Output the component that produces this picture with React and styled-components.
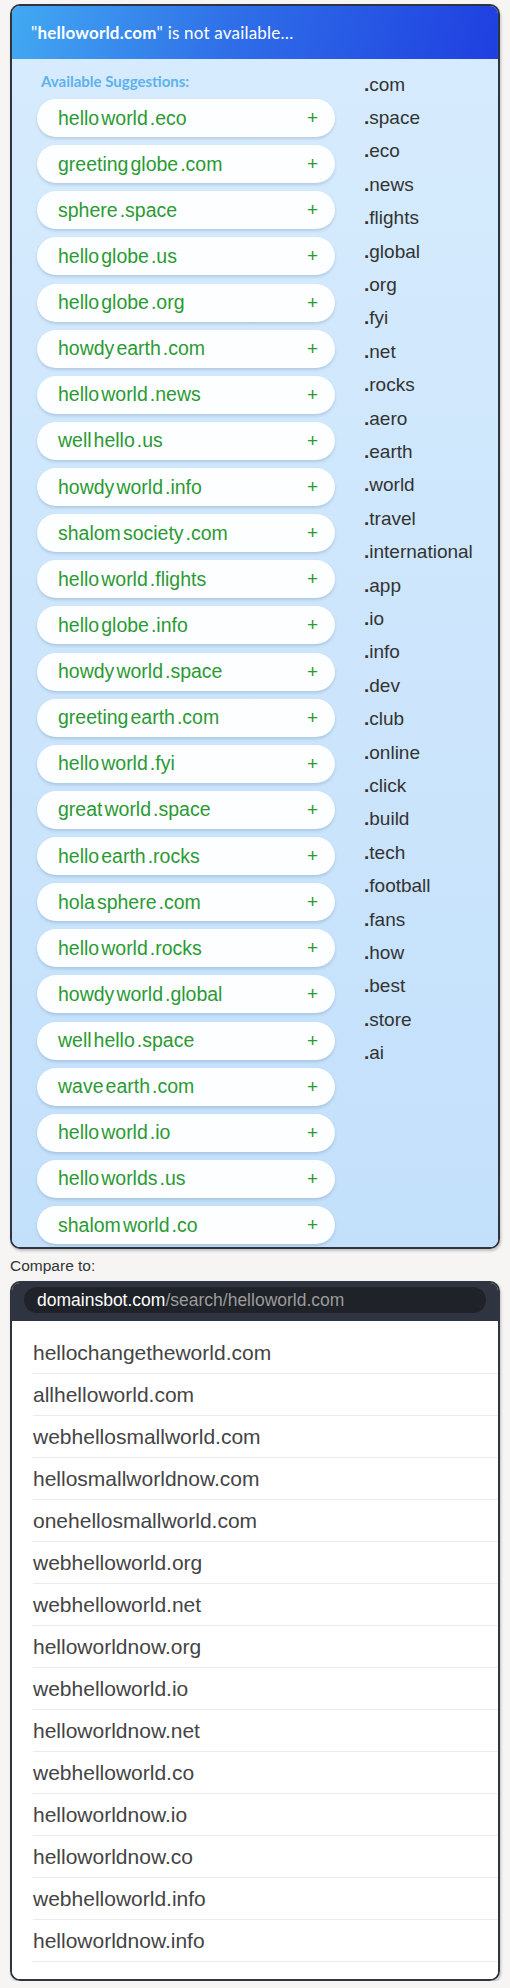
import React from "react";
import styled, { createGlobalStyle } from "styled-components";

const Global = createGlobalStyle`
  html, body { margin: 0; padding: 0; }
  body {
    background: #f6f5f3;
    font-family: "Liberation Sans", Arial, sans-serif;
    color: #333;
  }
`;

const Page = styled.div`
  width: 510px;
  padding: 4px 10px 0;
  box-sizing: border-box;
`;

const Card = styled.div`
  border: 2px solid #2f3540;
  border-radius: 10px;
  overflow: hidden;
  box-shadow: 1px 2px 3px rgba(0, 0, 0, 0.22);
`;

const Header = styled.div`
  height: 53px;
  display: flex;
  align-items: center;
  padding-left: 19px;
  background: linear-gradient(105deg, #42a9f2 0%, #2f6fe8 45%, #1f3fe0 100%);
  color: #fff;
  font-family: Lato, "Open Sans", sans-serif;
  font-size: 17px;
  letter-spacing: 0.2px;
  b { font-weight: 700; }
`;

const Body = styled.div`
  display: grid;
  grid-template-columns: 298px 1fr;
  column-gap: 29px;
  padding: 0 0 3px 25px;
  background: linear-gradient(180deg, #d6ebfd 0%, #c3e0fb 100%);
`;

const Left = styled.div`
  display: flex;
  flex-direction: column;
  padding-top: 14px;
`;

const Label = styled.div`
  font-family: Lato, "Open Sans", sans-serif;
  font-weight: 700;
  font-size: 15px;
  line-height: 17px;
  color: #5db2ec;
  padding-left: 4px;
  margin-bottom: 9px;
`;

const Pills = styled.div`
  display: flex;
  flex-direction: column;
  gap: 8.125px;
`;

const Pill = styled.div`
  height: 38px;
  border-radius: 19px;
  background: #fdfeff;
  box-shadow: 0 2px 3px rgba(40, 70, 110, 0.18);
  display: flex;
  align-items: center;
  justify-content: space-between;
  padding: 0 17px 0 21px;
  color: #2b9a33;
  font-size: 19.5px;
`;

const Name = styled.span`
  display: flex;
  span + span { margin-left: 2px; }
`;

const Plus = styled.span`
  font-size: 19px;
  font-weight: 400;
`;

const Tlds = styled.div`
  padding-top: 8.5px;
  display: flex;
  flex-direction: column;
`;

const Tld = styled.div`
  font-size: 19px;
  line-height: 33.4px;
  color: #333;
  b { font-weight: 700; }
`;

const Compare = styled.div`
  font-size: 15.5px;
  color: #333;
  line-height: 20px;
  margin: 7px 0 5px;
`;

const DarkHeader = styled.div`
  background: #2f3540;
  padding: 4px 12px 8px;
`;

const UrlBar = styled.div`
  height: 26px;
  border-radius: 13px;
  background: #1f2228;
  display: flex;
  align-items: center;
  padding-left: 13px;
  font-size: 17.5px;
  color: #9b9b9b;
  span { color: #ffffff; }
`;

const List = styled.div`
  background: #fff;
  padding: 11px 0 17px 21px;
`;

const Item = styled.div`
  height: 41px;
  border-bottom: 1px solid #ebebeb;
  display: flex;
  align-items: center;
  font-size: 21px;
  color: #444;
`;

const suggestions = [
  ["hello", "world", ".eco"],
  ["greeting", "globe", ".com"],
  ["sphere", ".space"],
  ["hello", "globe", ".us"],
  ["hello", "globe", ".org"],
  ["howdy", "earth", ".com"],
  ["hello", "world", ".news"],
  ["well", "hello", ".us"],
  ["howdy", "world", ".info"],
  ["shalom", "society", ".com"],
  ["hello", "world", ".flights"],
  ["hello", "globe", ".info"],
  ["howdy", "world", ".space"],
  ["greeting", "earth", ".com"],
  ["hello", "world", ".fyi"],
  ["great", "world", ".space"],
  ["hello", "earth", ".rocks"],
  ["hola", "sphere", ".com"],
  ["hello", "world", ".rocks"],
  ["howdy", "world", ".global"],
  ["well", "hello", ".space"],
  ["wave", "earth", ".com"],
  ["hello", "world", ".io"],
  ["hello", "worlds", ".us"],
  ["shalom", "world", ".co"],
];

const tlds = [
  "com", "space", "eco", "news", "flights", "global", "org", "fyi", "net",
  "rocks", "aero", "earth", "world", "travel", "international", "app", "io",
  "info", "dev", "club", "online", "click", "build", "tech", "football",
  "fans", "how", "best", "store", "ai",
];

const results = [
  "hellochangetheworld.com",
  "allhelloworld.com",
  "webhellosmallworld.com",
  "hellosmallworldnow.com",
  "onehellosmallworld.com",
  "webhelloworld.org",
  "webhelloworld.net",
  "helloworldnow.org",
  "webhelloworld.io",
  "helloworldnow.net",
  "webhelloworld.co",
  "helloworldnow.io",
  "helloworldnow.co",
  "webhelloworld.info",
  "helloworldnow.info",
];

export default function App() {
  return (
    <Page>
      <Global />
      <Card>
        <Header>
          <span>
            "<b>helloworld.com</b>" is not available…
          </span>
        </Header>
        <Body>
          <Left>
            <Label>Available Suggestions:</Label>
            <Pills>
              {suggestions.map((parts, i) => (
                <Pill key={i}>
                  <Name>
                    {parts.map((p, j) => (
                      <span key={j}>{p}</span>
                    ))}
                  </Name>
                  <Plus>+</Plus>
                </Pill>
              ))}
            </Pills>
          </Left>
          <Tlds>
            {tlds.map((t) => (
              <Tld key={t}>
                <b>.</b>
                {t}
              </Tld>
            ))}
          </Tlds>
        </Body>
      </Card>
      <Compare>Compare to:</Compare>
      <Card>
        <DarkHeader>
          <UrlBar>
            <span>domainsbot.com</span>/search/helloworld.com
          </UrlBar>
        </DarkHeader>
        <List>
          {results.map((r) => (
            <Item key={r}>{r}</Item>
          ))}
        </List>
      </Card>
    </Page>
  );
}
